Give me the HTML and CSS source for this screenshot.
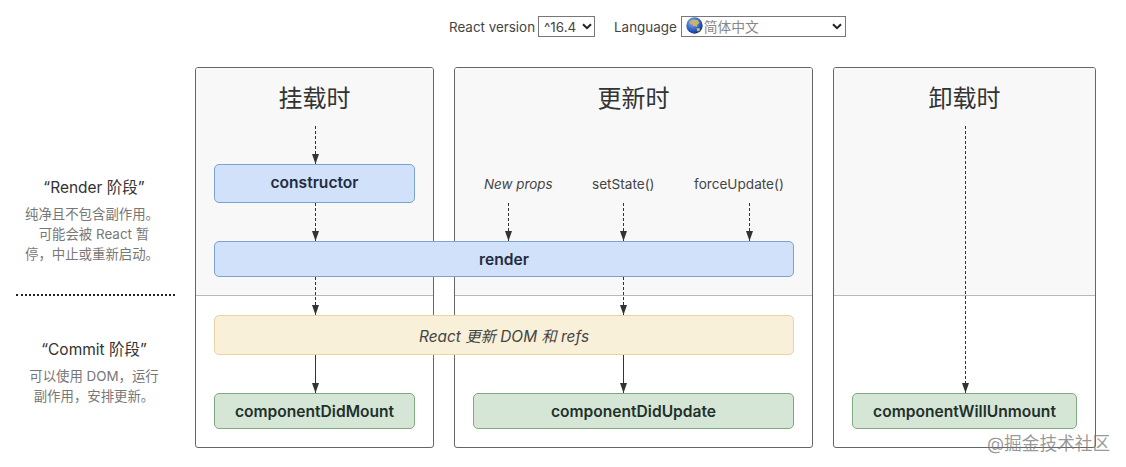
FILE: index.html
```html
<!DOCTYPE html>
<html lang="zh-CN">
<head>
<meta charset="utf-8">
<title>React lifecycle diagram</title>
<link rel="stylesheet" href="styles.css">
</head>
<body>
<div class="page">
  <header class="toolbar">
    <label class="field">React version
      <span class="select-wrap">
        <select class="select select-version"><option>^16.4</option><option>^16.3</option></select>
        <svg class="chevron" width="10" height="7" viewBox="0 0 10 7"><path d="M1 1.2 5 5.2 9 1.2" fill="none" stroke="#222" stroke-width="2"/></svg>
      </span>
    </label>
    <label class="field field-lang">Language
      <span class="select-wrap">
        <select class="select select-lang"><option>简体中文</option><option>English</option></select>
        <svg class="globe" width="17" height="17" viewBox="0 0 17 17">
          <defs><radialGradient id="sea" cx="38%" cy="32%" r="75%"><stop offset="0" stop-color="#7fb4f0"/><stop offset=".6" stop-color="#2f62c4"/><stop offset="1" stop-color="#12286e"/></radialGradient></defs>
          <circle cx="8.5" cy="8.5" r="8.2" fill="url(#sea)"/>
          <path d="M3.5 4.5 7 2.5 12 3.2 13.5 6 11.5 7.5 11 10 9 9 7.5 9.5 6.5 7.5 4 7Z" fill="#c9b36a"/>
          <path d="M10.5 11.5 13.5 11 14 13.5 11.5 14.5Z" fill="#d3bd74"/>
        </svg>
        <svg class="chevron" width="10" height="7" viewBox="0 0 10 7"><path d="M1 1.2 5 5.2 9 1.2" fill="none" stroke="#222" stroke-width="2"/></svg>
      </span>
    </label>
  </header>

  <main class="diagram">
    <aside class="phases">
      <section class="phase phase-render">
        <h2 class="phase-title">“Render 阶段”</h2>
        <p class="phase-text">纯净且不包含副作用。<br>&nbsp;可能会被 React 暂<br>停&#xFF0C;中止或重新启动。</p>
      </section>
      <div class="phase-rule"></div>
      <section class="phase phase-commit">
        <h2 class="phase-title">“Commit 阶段”</h2>
        <p class="phase-text">可以使用 DOM&#xFF0C;运行<br>副作用&#xFF0C;安排更新。</p>
      </section>
    </aside>

    <section class="column"><div class="column-top"><h1 class="column-title">挂载时</h1></div></section>
    <section class="column"><div class="column-top"><h1 class="column-title">更新时</h1></div></section>
    <section class="column"><div class="column-top"><h1 class="column-title">卸载时</h1></div></section>

    <svg class="arrows" width="1126" height="467" viewBox="0 0 1126 467">
      <g class="dash">
        <path d="M315.5 126V164"/><path d="M315.5 203V241"/><path d="M315.5 277V315"/>
        <path d="M508.5 203V241"/><path d="M623.5 203V241"/><path d="M749.5 203V241"/>
        <path d="M623.5 277V315"/>
        <path d="M965.5 126V393"/>
      </g>
      <g class="solid">
        <path d="M315.5 355V393"/><path d="M623.5 355V393"/>
      </g>
      <g class="heads">
        <path d="M312 154h7l-3.500 10z"/><path d="M312 231h7l-3.500 10z"/><path d="M312 305h7l-3.500 10z"/><path d="M312 383h7l-3.500 10z"/>
        <path d="M505 231h7l-3.500 10z"/><path d="M620 231h7l-3.500 10z"/><path d="M746 231h7l-3.500 10z"/>
        <path d="M620 305h7l-3.500 10z"/><path d="M620 383h7l-3.500 10z"/>
        <path d="M962 383h7l-3.500 10z"/>
      </g>
    </svg>

    <div class="node blue n-constructor">constructor</div>
    <div class="node blue n-render">render</div>
    <div class="node yellow n-commit"><em>React 更新 DOM 和 refs</em></div>
    <div class="node green n-mount">componentDidMount</div>
    <div class="node green n-update">componentDidUpdate</div>
    <div class="node green n-unmount">componentWillUnmount</div>

    <span class="trigger t-props"><em>New props</em></span>
    <span class="trigger t-state">setState()</span>
    <span class="trigger t-force">forceUpdate()</span>
  </main>

  <div class="watermark">@掘金技术社区</div>
</div>
</body>
</html>
```
FILE: styles.css
```css
* { box-sizing: border-box; }
html, body { margin: 0; padding: 0; background: #fff; }
body {
  font-family: Inter, "Noto Sans CJK SC", sans-serif;
  color: #333;
}
.page {
  position: relative;
  width: 1126px;
  height: 467px;
  overflow: hidden;
}
.toolbar {
  display: flex;
  align-items: center;
  height: 21px;
  margin-top: 16px;
  padding-left: 449px;
  position: absolute;
  top: 0;
  left: 0;
  font-size: 13.4px;
  color: #444;
  z-index: 1;
}
.field { display: flex; align-items: center; gap: 3px; white-space: nowrap; }
.field-lang { margin-left: 19px; gap: 4px; }
.select-wrap { position: relative; display: block; height: 21px; }
.select {
  display: block;
  appearance: none;
  -webkit-appearance: none;
  height: 21px;
  margin: 0;
  border: 1px solid #777;
  border-radius: 0;
  background: #fff;
  font: 13.4px Inter, "Noto Sans CJK SC", sans-serif;
  color: #444;
  outline: none;
}
.select-version { width: 57px; padding: 0 0 0 5px; }
.select-lang { width: 165px; padding: 0 0 0 22px; color: #888; font-size: 13.8px; }
.chevron { position: absolute; top: 7px; right: 3px; }
.select-lang + .globe + .chevron { right: 4px; }
.globe { position: absolute; left: 5px; top: 1px; }

.diagram {
  position: absolute;
  top: 0;
  left: 0;
  width: 1126px;
  height: 467px;
  display: grid;
  grid-template-columns: 175px 239px 359px 263px;
  column-gap: 20px;
  padding-top: 67px;
  grid-template-rows: 381px;
}
.phases {
  position: relative;
  display: flex;
  flex-direction: column;
}
.phase { text-align: center; width: 175px; }
.phase-render { padding: 111px 0 0 13px; height: 227px; }
.phase-commit { padding: 44px 0 0 13px; }
.phase-title {
  margin: 0 0 6px;
  font-size: 15.5px;
  line-height: 20px;
  font-weight: 400;
  color: #333;
}
.phase-text {
  margin: 0 0 0 -4px;
  font-size: 13.4px;
  line-height: 20px;
  color: #777;
  white-space: nowrap;
}
.phase-commit .phase-text { margin-left: 0; }
.phase-rule {
  margin-left: 16px;
  height: 2px;
  width: 159px;
  border-top: 2px dotted #222;
}
.column {
  border: 1px solid #666;
  border-radius: 3px;
  overflow: hidden;
  background: #fff;
}
.column-top {
  height: 228px;
  background: #f8f8f8;
  border-bottom: 1px solid #b9b9b9;
  text-align: center;
}
.column-title {
  margin: 0;
  padding-top: 13px;
  font-size: 24px;
  line-height: 36px;
  font-weight: 400;
  color: #333;
}
.arrows { position: absolute; left: 0; top: 0; pointer-events: none; }
.arrows .dash path { fill: none; stroke: #333; stroke-width: 1; stroke-dasharray: 3 2; }
.arrows .solid path { fill: none; stroke: #333; stroke-width: 1; }
.arrows .heads path { fill: #333; }

.node {
  position: absolute;
  display: flex;
  align-items: center;
  justify-content: center;
  border-radius: 5px;
  border: 1px solid;
  font-size: 15.6px;
  font-weight: 600;
  color: #2a3040;
}
.blue { background: #d2e1fa; border-color: #7ba3cf; color: #222b40; }
.yellow { background: #f9f0da; border-color: #e6d5a0; font-weight: 400; color: #444; font-size: 15.4px; }
.green { background: #d6e6d6; border-color: #7fa97f; color: #22302a; }
.n-constructor { left: 214px; top: 164px; width: 201px; height: 39px; padding-bottom: 2px; }
.n-render { left: 214px; top: 241px; width: 580px; height: 36px; }
.n-commit { left: 214px; top: 315px; width: 580px; height: 40px; }
.n-mount { left: 214px; top: 393px; width: 201px; height: 36px; }
.n-update { left: 473px; top: 393px; width: 321px; height: 36px; }
.n-unmount { left: 852px; top: 393px; width: 225px; height: 36px; }

.trigger {
  position: absolute;
  top: 175px;
  font-size: 13.6px;
  line-height: 18px;
  color: #444;
  white-space: nowrap;
}
.t-props { left: 484px; font-size: 13.4px; }
.t-state { left: 592px; }
.t-force { left: 694px; }

.watermark {
  position: absolute;
  left: 987px;
  top: 432px;
  font-size: 17.7px;
  line-height: 24px;
  color: rgba(120, 120, 120, 0.75);
  white-space: nowrap;
}
```
